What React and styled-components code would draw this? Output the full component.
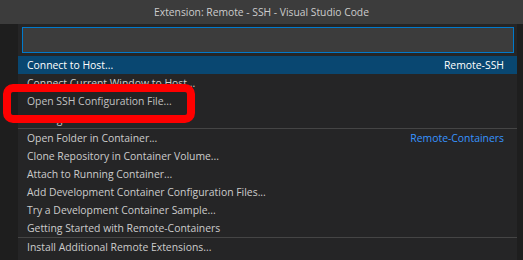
import React from "react";
import styled, { createGlobalStyle } from "styled-components";

const Global = createGlobalStyle`
  html, body { margin: 0; padding: 0; background: #1e1e1e; }
  body { width: 523px; height: 260px; overflow: hidden; font-family: "Open Sans", "Noto Sans", sans-serif; }
`;

const Window = styled.div`
  width: 523px;
  height: 260px;
  display: flex;
  flex-direction: column;
  background: #1e1e1e;
  position: relative;
  overflow: hidden;
`;

const TitleBar = styled.div`
  height: 24px;
  flex: 0 0 24px;
  background: #3c3c3c;
  color: #cccccc;
  font-size: 10.3px;
  display: flex;
  align-items: center;
  justify-content: center;
`;

const Body = styled.div`
  flex: 1;
  display: flex;
  padding: 0 6px 0 18px;
`;

const Panel = styled.div`
  flex: 1;
  background: #252526;
  display: flex;
  flex-direction: column;
  padding-top: 3px;
`;

const Input = styled.div`
  height: 24px;
  margin: 0 3px 3px 4px;
  background: #3c3c3c;
  border: 1px solid #007acc;
`;

const Group = styled.div`
  display: flex;
  flex-direction: column;
  border-top: ${(p) => (p.$sep ? "1px solid #454545" : "none")};
`;

const Row = styled.div`
  height: 18px;
  display: flex;
  align-items: center;
  justify-content: space-between;
  padding: 0 13px 0 9px;
  font-size: 10.4px;
  color: ${(p) => (p.$selected ? "#ffffff" : "#cccccc")};
  background: ${(p) => (p.$selected ? "#094771" : "transparent")};
  white-space: nowrap;
`;

const Tag = styled.span`
  color: ${(p) => (p.$selected ? "#ffffff" : "#3794ff")};
`;

const Highlight = styled.div`
  position: absolute;
  left: 3px;
  top: 84px;
  width: 192px;
  height: 39px;
  box-sizing: border-box;
  border: 8px solid #ff0000;
  border-radius: 10px;
  background: rgba(0, 0, 0, 0.05);
  pointer-events: none;
`;

const groups = [
  [
    { label: "Connect to Host...", tag: "Remote-SSH", selected: true },
    { label: "Connect Current Window to Host..." },
    { label: "Open SSH Configuration File..." },
    { label: "Getting Started with SSH" },
  ],
  [
    { label: "Open Folder in Container...", tag: "Remote-Containers" },
    { label: "Clone Repository in Container Volume..." },
    { label: "Attach to Running Container..." },
    { label: "Add Development Container Configuration Files..." },
    { label: "Try a Development Container Sample..." },
    { label: "Getting Started with Remote-Containers" },
  ],
  [{ label: "Install Additional Remote Extensions..." }],
];

export default function App() {
  return (
    <>
      <Global />
      <Window>
        <TitleBar>Extension: Remote - SSH - Visual Studio Code</TitleBar>
        <Body>
          <Panel>
            <Input />
            {groups.map((g, gi) => (
              <Group key={gi} $sep={gi > 0}>
                {g.map((r) => (
                  <Row key={r.label} $selected={r.selected}>
                    <span>{r.label}</span>
                    {r.tag && <Tag $selected={r.selected}>{r.tag}</Tag>}
                  </Row>
                ))}
              </Group>
            ))}
          </Panel>
        </Body>
        <Highlight />
      </Window>
    </>
  );
}
